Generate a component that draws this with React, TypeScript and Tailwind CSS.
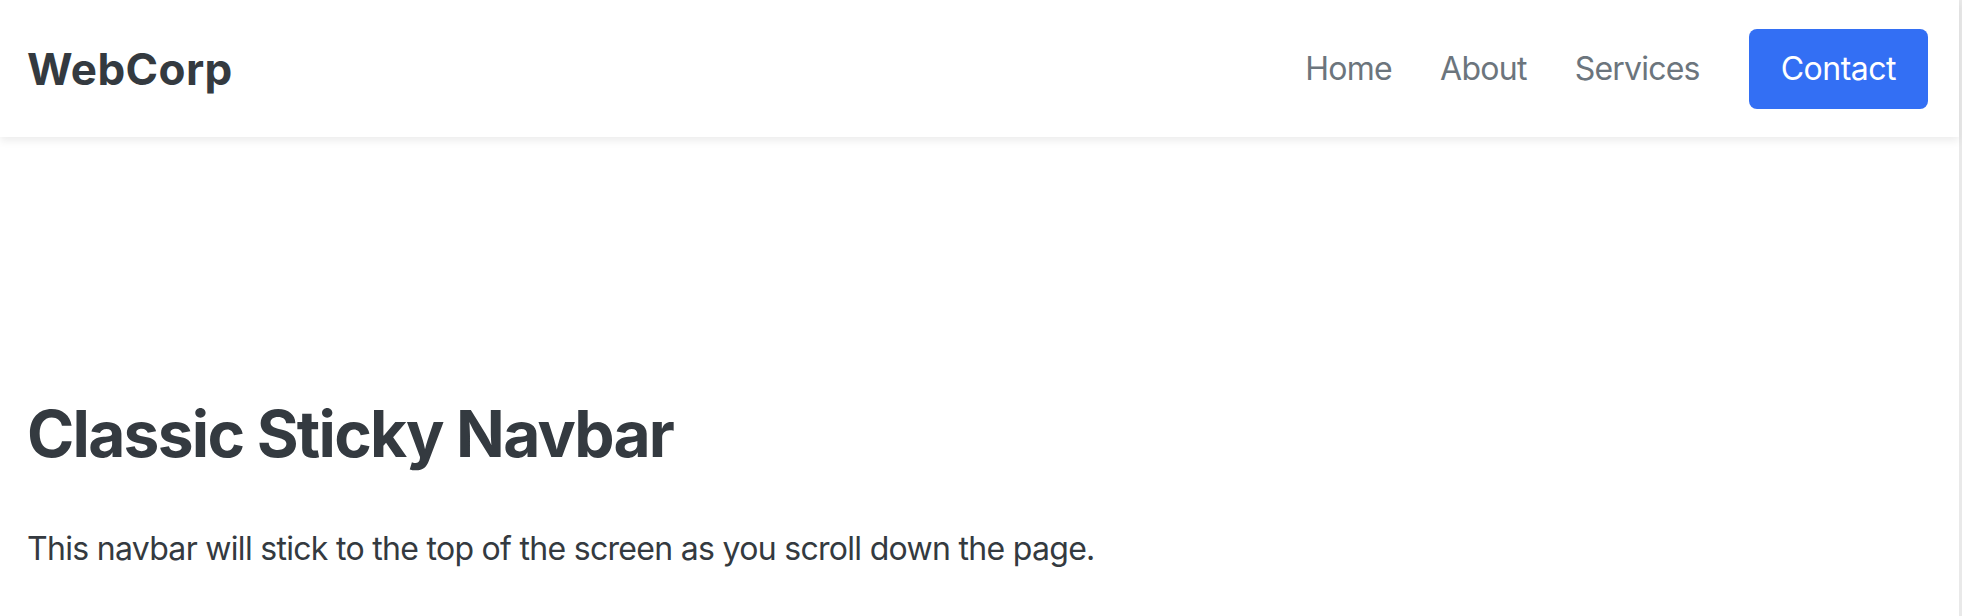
import React from "react";

export default function App() {
  return (
    <div className="flex min-h-screen bg-white" style={{ fontFamily: "Inter, 'Noto Sans', sans-serif" }}>
      <div className="flex-1 min-w-0">
        <nav className="sticky top-0 h-[137px] bg-white shadow-[0_4px_8px_rgba(0,0,0,0.075)] flex items-center justify-between pl-[27px] pr-[31px]">
          <a className="text-[44px] font-bold text-[#343a40] tracking-[0.4px]">WebCorp</a>
          <div className="flex items-center">
            <a className="text-[32px] text-[#6c757d] leading-[48px] tracking-[-0.7px]">Home</a>
            <a className="ml-[48px] text-[32px] text-[#6c757d] leading-[48px] tracking-[-0.7px]">About</a>
            <a className="ml-[48px] text-[32px] text-[#6c757d] leading-[48px] tracking-[-0.8px]">Services</a>
            <a className="ml-[49px] h-[80px] px-[32px] rounded-[8px] bg-[#336ff4] text-white text-[32px] leading-[48px] flex items-center tracking-[-0.5px]">Contact</a>
          </div>
        </nav>
        <main className="pl-[27px] pr-[31px] pt-[259px]">
          <h1 className="text-[64px] leading-[76.8px] font-bold text-[#343a40] tracking-[-1.75px]">Classic Sticky Navbar</h1>
          <p className="mt-[52px] text-[32px] leading-[48px] text-[#343a40] tracking-[-0.7px]">
            This navbar will stick to the top of the screen as you scroll down the page.
          </p>
        </main>
      </div>
      <div className="w-[3px] bg-[#e9e9e9]" />
    </div>
  );
}
